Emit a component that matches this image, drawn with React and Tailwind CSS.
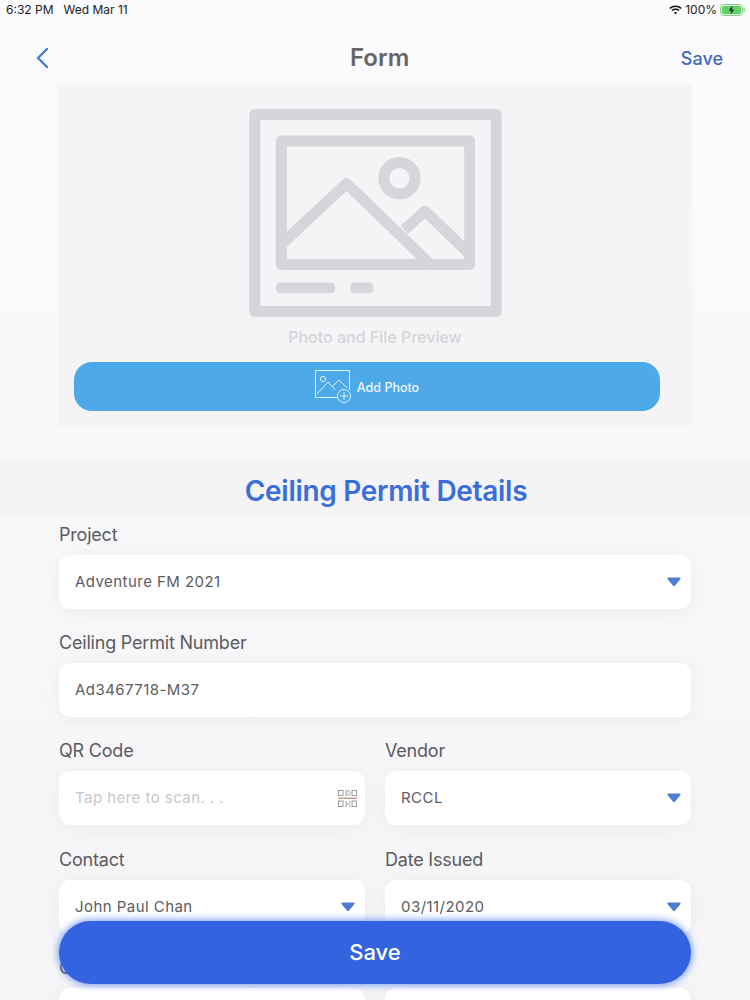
import React from 'react';

function Caret() {
    return (
        <svg width="14" height="10" viewBox="0 0 14 10" className="shrink-0">
            <path d="M1.5 1.5 H12.5 L7 8 Z" fill="#4f7bd0" stroke="#4f7bd0" strokeWidth="2.2" strokeLinejoin="round" />
        </svg>
    );
}

function QrIcon() {
    return (
        <svg width="19" height="17" viewBox="0 0 19 17" className="shrink-0 -mr-[2px]">
            <g fill="none" stroke="#9a9a9f" strokeWidth="1">
                <rect x="0.5" y="0.5" width="4.5" height="5" />
                <rect x="14" y="0.5" width="4.5" height="5" />
                <rect x="0.5" y="11" width="4.5" height="5.5" />
                <rect x="14" y="11" width="4.5" height="5.5" />
                <path d="M7 1 H12 M7 3 H9.5 M11 3 H12.5 M7 5 H12 M7 12 H9 M10.5 12 H12.5 M7 14 H12 M7 16 H9.5 M11 16 H12.5" />
            </g>
            <rect x="0" y="7.6" width="19" height="1.2" fill="#b5837b" />
        </svg>
    );
}

function PhotoPlaceholder() {
    return (
        <svg width="253" height="208" viewBox="55 57 758 625">
            <g fill="none" stroke="#d6d5d9" strokeWidth="33" strokeLinejoin="round">
                <rect x="71.5" y="73.5" width="725" height="592" />
                <rect x="151" y="153" width="566" height="371" />
                <circle cx="506" cy="265" r="47" />
                <path d="M155 460 L347 281 L597 522" />
                <path d="M520 420 L583 364 L722 498" />
            </g>
            <rect x="135" y="578" width="178" height="33" rx="14" fill="#d6d5d9" />
            <rect x="358" y="578" width="70" height="33" rx="14" fill="#d6d5d9" />
        </svg>
    );
}

function AddPhotoIcon() {
    return (
        <svg width="37" height="34" viewBox="0 0 37 34" fill="none" stroke="#dff3ff" strokeWidth="1">
            <path d="M25 27.5 H0.5 V0.5 H34.5 V20" />
            <circle cx="8" cy="9" r="2.6" />
            <path d="M2 24 L13 12 L20 19.5 M17.5 16.5 L24 10 L32 18" />
            <circle cx="29" cy="26" r="6.5" fill="#4ea9e8" />
            <path d="M29 22 V30 M25 26 H33" />
        </svg>
    );
}

function WifiIcon() {
    return (
        <svg width="13" height="10" viewBox="0 0 13 10" fill="none" stroke="#111111" strokeWidth="1.5">
            <path d="M0.8 3.4 C4 0.4 9 0.4 12.2 3.4" />
            <path d="M2.9 5.5 C4.8 3.8 8.2 3.8 10.1 5.5" />
            <path d="M6.5 9.4 L4.9 7.6 C5.8 6.8 7.2 6.8 8.1 7.6 Z" fill="#111111" stroke="none" />
        </svg>
    );
}

function BatteryIcon() {
    return (
        <svg width="25" height="12" viewBox="0 0 25 12">
            <rect x="0.5" y="0.5" width="22" height="11" rx="3" fill="#e8f6e8" stroke="#86cf88" />
            <rect x="2" y="2" width="19" height="8" rx="1.6" fill="#5fd068" />
            <rect x="23.4" y="4" width="1.4" height="4" rx="0.7" fill="#86cf88" />
            <path d="M12.5 1.5 L8.8 6.6 H11.2 L10.5 10.5 L14.2 5.4 H11.8 Z" fill="#222222" />
        </svg>
    );
}

function Field({ label, value, placeholder, icon }) {
    return (
        <div className="flex flex-col flex-1 min-w-0">
            <div className="h-[38px] pt-[6px] text-[18px] leading-[24px] text-[#5b5b60] tracking-[-0.2px]">{label}</div>
            <div className="h-[54px] flex items-center justify-between pl-4 pr-[10px] bg-white rounded-[11px] shadow-[0_3px_18px_rgba(0,0,0,0.05)]">
                <span className={`text-[15px] tracking-[0.45px] ${placeholder ? 'text-[#c8c8cc]' : 'text-[#5c5c62]'}`}>{value || placeholder}</span>
                {icon}
            </div>
            <div className="h-4" />
        </div>
    );
}

export default function App() {
    return (
        <div className="relative w-[750px] h-[1000px] overflow-hidden bg-gradient-to-b from-[#fbfbfd] to-[#f5f5f7] font-['Inter','Liberation_Sans',sans-serif]">
            {/* status bar */}
            <div className="h-[19px] pl-[6px] pr-[5px] flex items-center justify-between text-[12px] text-[#222222]">
                <div className="flex gap-[10px]">
                    <span>6:32 PM</span>
                    <span>Wed Mar 11</span>
                </div>
                <div className="flex items-center gap-[3px]">
                    <WifiIcon />
                    <span>100%</span>
                    <BatteryIcon />
                </div>
            </div>

            {/* nav */}
            <div className="h-[66px] pl-[36px] pr-[27px] pt-[12px] flex items-center">
                <svg width="12" height="20" viewBox="0 0 12 20" fill="none" stroke="#3d7cc9" strokeWidth="2.3" strokeLinecap="round" strokeLinejoin="round">
                    <path d="M11 1 L2 10 L11 19" />
                </svg>
                <span className="ml-[302px] text-[24px] font-semibold text-[#66666a]">Form</span>
                <span className="ml-auto text-[18px] font-medium text-[#3f68c4]">Save</span>
            </div>

            {/* preview panel */}
            <div className="mx-[58px] h-[342px] bg-[#f4f4f7] flex flex-col">
                <div className="flex justify-center pt-6">
                    <PhotoPlaceholder />
                </div>
                <div className="text-center text-[16px] leading-[20px] font-medium text-[#d4d4d8] mt-[10px]">Photo and File Preview</div>
                <div className="mt-[15px] ml-4 mr-8 h-[49px] rounded-[18px] bg-[#4ea9e8] flex items-center justify-center gap-[5px]">
                    <AddPhotoIcon />
                    <span className="mt-[3px] text-[12.5px] font-medium text-[#eef8ff]">Add Photo</span>
                </div>
            </div>

            {/* section title */}
            <div className="mt-[33px] h-[57px] pt-1 bg-[#f4f4f6] flex items-center justify-center pl-[22px]">
                <h2 className="text-[28px] font-semibold text-[#3a6fd8] tracking-[-0.3px]">Ceiling Permit Details</h2>
            </div>

            {/* form */}
            <div className="px-[59px] flex flex-col">
                <Field label="Project" value="Adventure FM 2021" icon={<Caret />} />
                <Field label="Ceiling Permit Number" value="Ad3467718-M37" />
                <div className="flex gap-5">
                    <Field label="QR Code" placeholder="Tap here to scan. . ." icon={<QrIcon />} />
                    <Field label="Vendor" value="RCCL" icon={<Caret />} />
                </div>
                <div className="flex gap-5 mt-px">
                    <Field label="Contact" value="John Paul Chan" icon={<Caret />} />
                    <Field label="Date Issued" value="03/11/2020" icon={<Caret />} />
                </div>
                <div className="flex gap-5">
                    <Field label="C" />
                    <Field />
                </div>
            </div>

            {/* floating save */}
            <button className="absolute left-[59px] top-[921px] w-[632px] h-[63px] rounded-[32px] bg-[#3463e0] shadow-[0_0_6px_2px_rgba(70,120,240,0.6)] text-[22px] font-medium text-white">
                Save
            </button>
        </div>
    );
}
